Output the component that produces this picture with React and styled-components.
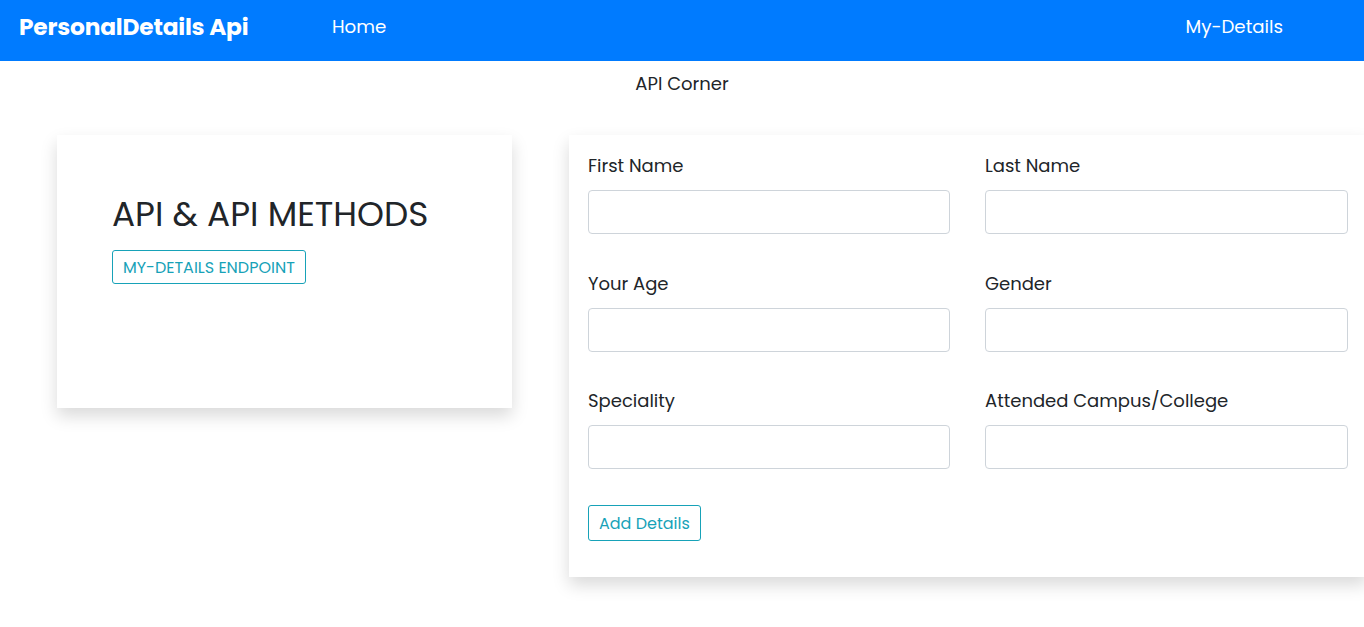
import React from 'react';
import styled, { createGlobalStyle } from 'styled-components';

const GlobalStyle = createGlobalStyle`
  body {
    margin: 0;
    font-family: Poppins, "Noto Sans", "Open Sans", sans-serif;
    color: #212529;
    background: #fff;
    overflow-x: hidden;
  }
  * { box-sizing: border-box; }
`

const NavBar = styled.nav`
  height: 61px;
  background: #007bff;
  display: flex;
  align-items: flex-start;
  padding: 12px 19px 0;
`

const Brand = styled.a`
  color: #fff;
  font-size: 23.3px;
  font-weight: 700;
  line-height: 30px;
  width: 313px;
  letter-spacing: -0.2px;
`

const NavList = styled.ul`
  list-style: none;
  margin: 0;
  padding: 0;
  display: flex;
  flex: 1;
`

const NavItem = styled.li`
  color: #fff;
  font-size: 18.2px;
  line-height: 30px;
  margin-left: ${p => p.$push ? 'auto' : '0'};
  margin-right: ${p => p.$push ? '62px' : '0'};
`

const Corner = styled.p`
  text-align: center;
  font-size: 18px;
  margin: 11px 0 0;
  line-height: 24px;
`

const Main = styled.main`
  display: flex;
  align-items: flex-start;
  gap: 57px;
  padding: 39px 0 40px 57px;
`

const Card = styled.section`
  background: #fff;
  box-shadow: 0 8px 16px rgba(0, 0, 0, 0.15);
  flex-shrink: 0;
`

const InfoCard = styled(Card)`
  width: 455px;
  height: 273px;
  padding: 55px 55px;
`

const Heading = styled.h2`
  font-size: 34.3px;
  font-weight: 400;
  margin: 0 0 12px;
  line-height: 48px;
`

const OutlineButton = styled.button`
  font-family: inherit;
  font-size: 16px;
  text-transform: ${p => p.$upper ? 'uppercase' : 'none'};
  color: #17a2b8;
  background: transparent;
  border: 1px solid #17a2b8;
  border-radius: 3px;
  padding: 0 10px;
  height: ${p => p.$tall ? '36px' : '34px'};
`

const FormCard = styled(Card)`
  width: 798px;
  padding: 19px 19px 36px;
`

const FieldGrid = styled.div`
  display: grid;
  grid-template-columns: 362px 363px;
  column-gap: 35px;
  row-gap: 37.5px;
  margin-bottom: 36px;
`

const Field = styled.div`
  display: flex;
  flex-direction: column;
`

const Label = styled.label`
  font-size: 18px;
  line-height: 24px;
  margin-bottom: 12px;
`

const Input = styled.input`
  height: 44px;
  border: 1px solid #ced4da;
  border-radius: 4px;
  font-family: inherit;
  font-size: 16px;
  padding: 6px 12px;
`

const fields = [
  'First Name',
  'Last Name',
  'Your Age',
  'Gender',
  'Speciality',
  'Attended Campus/College',
]

export default function App() {
  return (
    <>
      <GlobalStyle />
      <NavBar>
        <Brand>PersonalDetails Api</Brand>
        <NavList>
          <NavItem>Home</NavItem>
          <NavItem $push>My-Details</NavItem>
        </NavList>
      </NavBar>
      <Corner>API Corner</Corner>
      <Main>
        <InfoCard>
          <Heading>API &amp; API METHODS</Heading>
          <OutlineButton $upper>My-Details Endpoint</OutlineButton>
        </InfoCard>
        <FormCard>
          <FieldGrid>
            {fields.map(f => (
              <Field key={f}>
                <Label>{f}</Label>
                <Input type="text" />
              </Field>
            ))}
          </FieldGrid>
          <OutlineButton $tall>Add Details</OutlineButton>
        </FormCard>
      </Main>
    </>
  );
}
